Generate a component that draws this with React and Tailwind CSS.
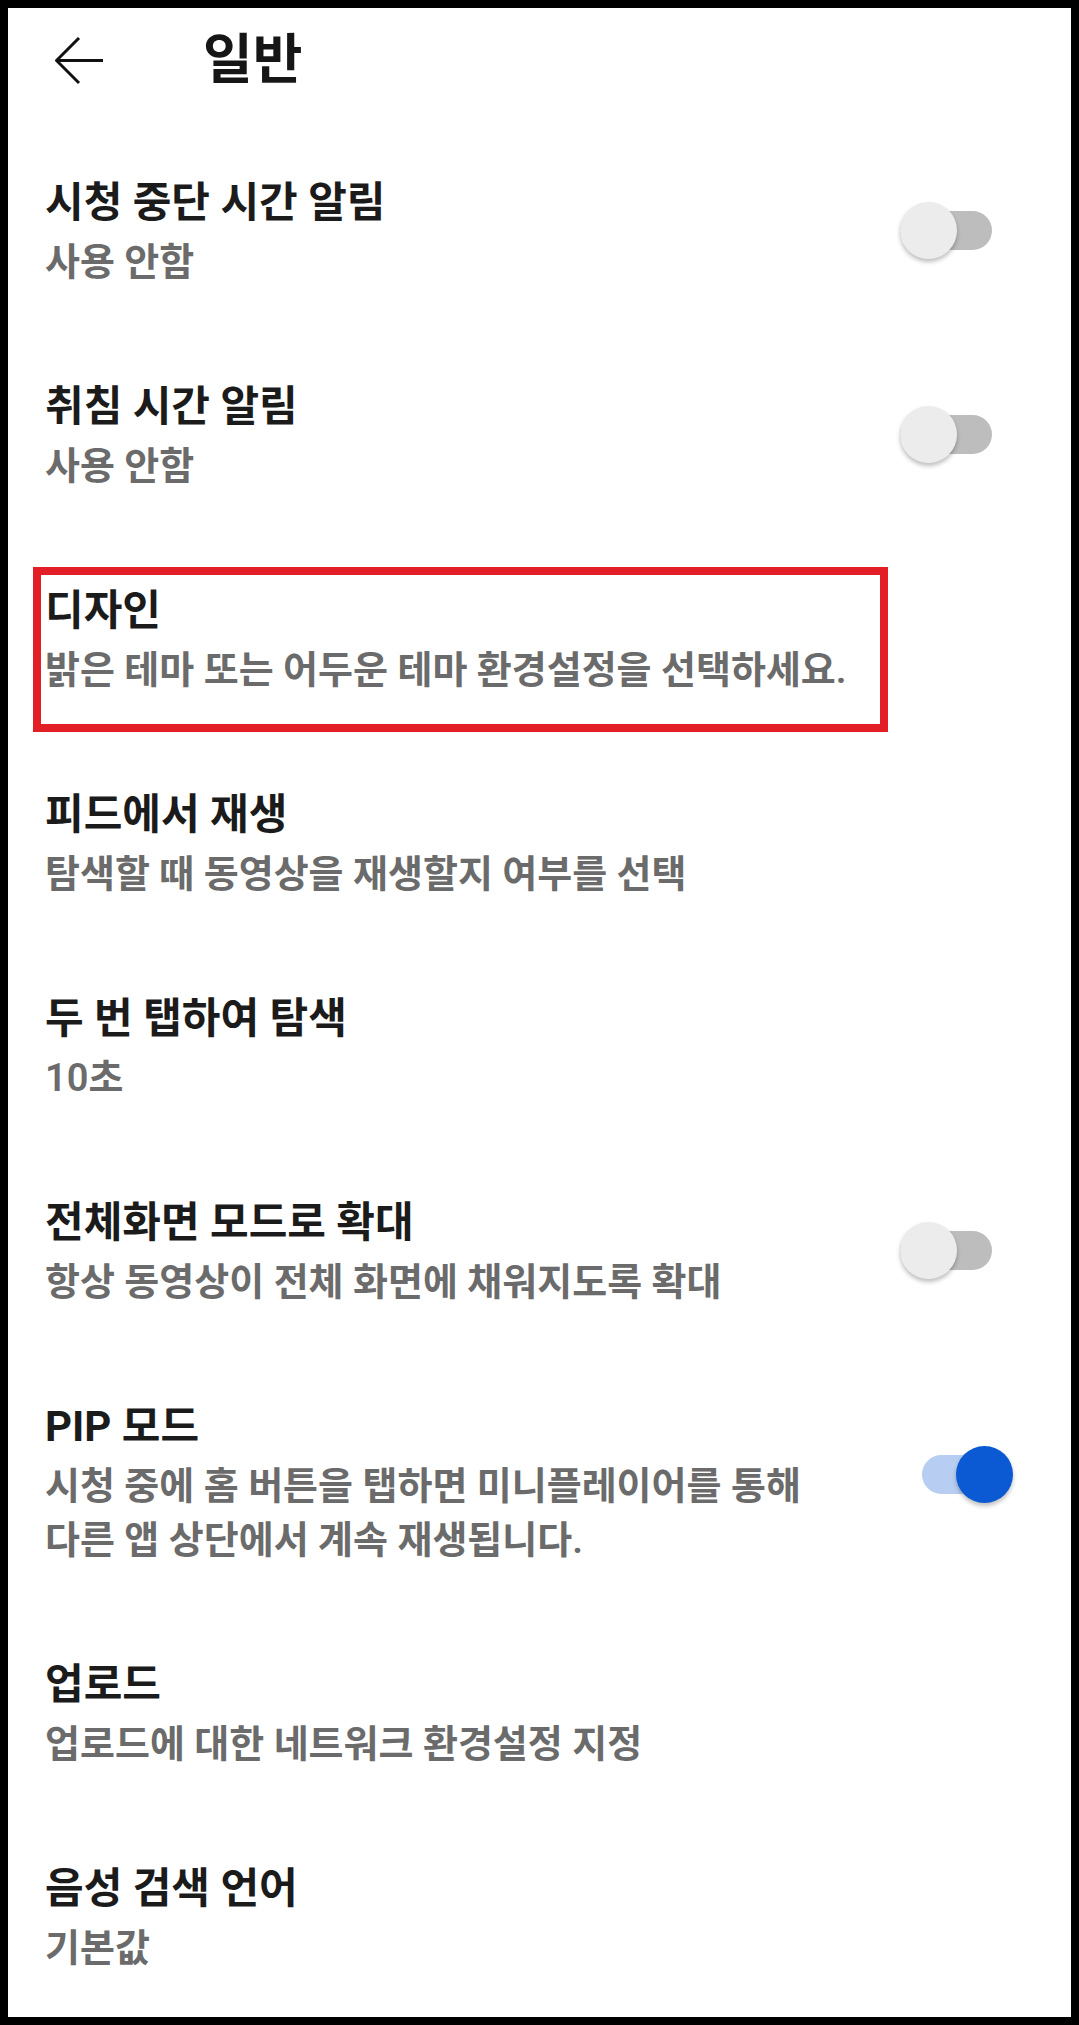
import React from 'react';

// settings rows for the "일반" screen
const items = [
  { title: '시청 중단 시간 알림', sub: ['사용 안함'], toggle: 'off' },
  { title: '취침 시간 알림', sub: ['사용 안함'], toggle: 'off' },
  { title: '디자인', sub: ['밝은 테마 또는 어두운 테마 환경설정을 선택하세요.'], marked: true },
  { title: '피드에서 재생', sub: ['탐색할 때 동영상을 재생할지 여부를 선택'] },
  { title: '두 번 탭하여 탐색', sub: ['10초'] },
  { title: '전체화면 모드로 확대', sub: ['항상 동영상이 전체 화면에 채워지도록 확대'], toggle: 'off' },
  { title: 'PIP 모드', sub: ['시청 중에 홈 버튼을 탭하면 미니플레이어를 통해', '다른 앱 상단에서 계속 재생됩니다.'], toggle: 'on' },
  { title: '업로드', sub: ['업로드에 대한 네트워크 환경설정 지정'] },
  { title: '음성 검색 언어', sub: ['기본값'] },
];

// switch: track with the thumb overflowing it
function Toggle({ on }) {
  if (on) {
    return (
      <div className="flex items-center justify-end w-[80px] h-[39px] ml-[22px] mr-[11px] -mt-[20px] rounded-full bg-[#b7cef2] shrink-0">
        <div className="w-[57px] h-[57px] -mr-[11px] shrink-0 rounded-full bg-[#0b5ad4] shadow-[0_3px_4px_rgba(0,0,0,0.25)]" />
      </div>
    );
  }
  return (
    <div className="flex items-center w-[92px] h-[39px] mr-[21px] -mt-[6px] rounded-full bg-[#bdbdbd] shrink-0">
      <div className="w-[57px] h-[57px] shrink-0 rounded-full bg-[#ececec] shadow-[0_3px_4px_rgba(0,0,0,0.25)]" />
    </div>
  );
}

function Row({ item }) {
  return (
    <div className="relative flex items-center py-[46px] pl-[37px] pr-[58px]">
      <div className="flex-1">
        <div className="text-[42px] leading-[52px] font-bold text-[#1b1b1b]">{item.title}</div>
        <div className="mt-[6px] text-[38px] leading-[54px] font-semibold text-[#6b6b6b]">
          {item.sub.map((line, i) => (
            <div key={i}>{line}</div>
          ))}
        </div>
      </div>
      {item.toggle && <Toggle on={item.toggle === 'on'} />}
      {/* red highlight box drawn over the row */}
      {item.marked && (
        <div className="absolute left-[25px] top-[28px] w-[855px] h-[165px] border-[8px] border-[#e21f26]" />
      )}
    </div>
  );
}

export default function App() {
  return (
    <div className="w-[1079px] h-[2025px] border-[8px] border-black bg-white overflow-hidden font-['Roboto','Noto_Sans_CJK_KR',sans-serif]">
      {/* Header */}
      <div className="flex items-center h-[106px] pl-[47px]">
        <svg width="48" height="48" viewBox="0 0 48 48" fill="none" stroke="#111" strokeWidth="3">
          <path d="M1 23.5 H48" />
          <path d="M24 1 L1.5 23.5 L24 46" />
        </svg>
        <h1 className="ml-[100px] text-[54px] leading-[60px] font-bold text-[#161616]">일반</h1>
      </div>

      {/* Settings list */}
      <div className="pt-[17px]">
        {items.map((item, i) => (
          <Row key={i} item={item} />
        ))}
      </div>
    </div>
  );
}
